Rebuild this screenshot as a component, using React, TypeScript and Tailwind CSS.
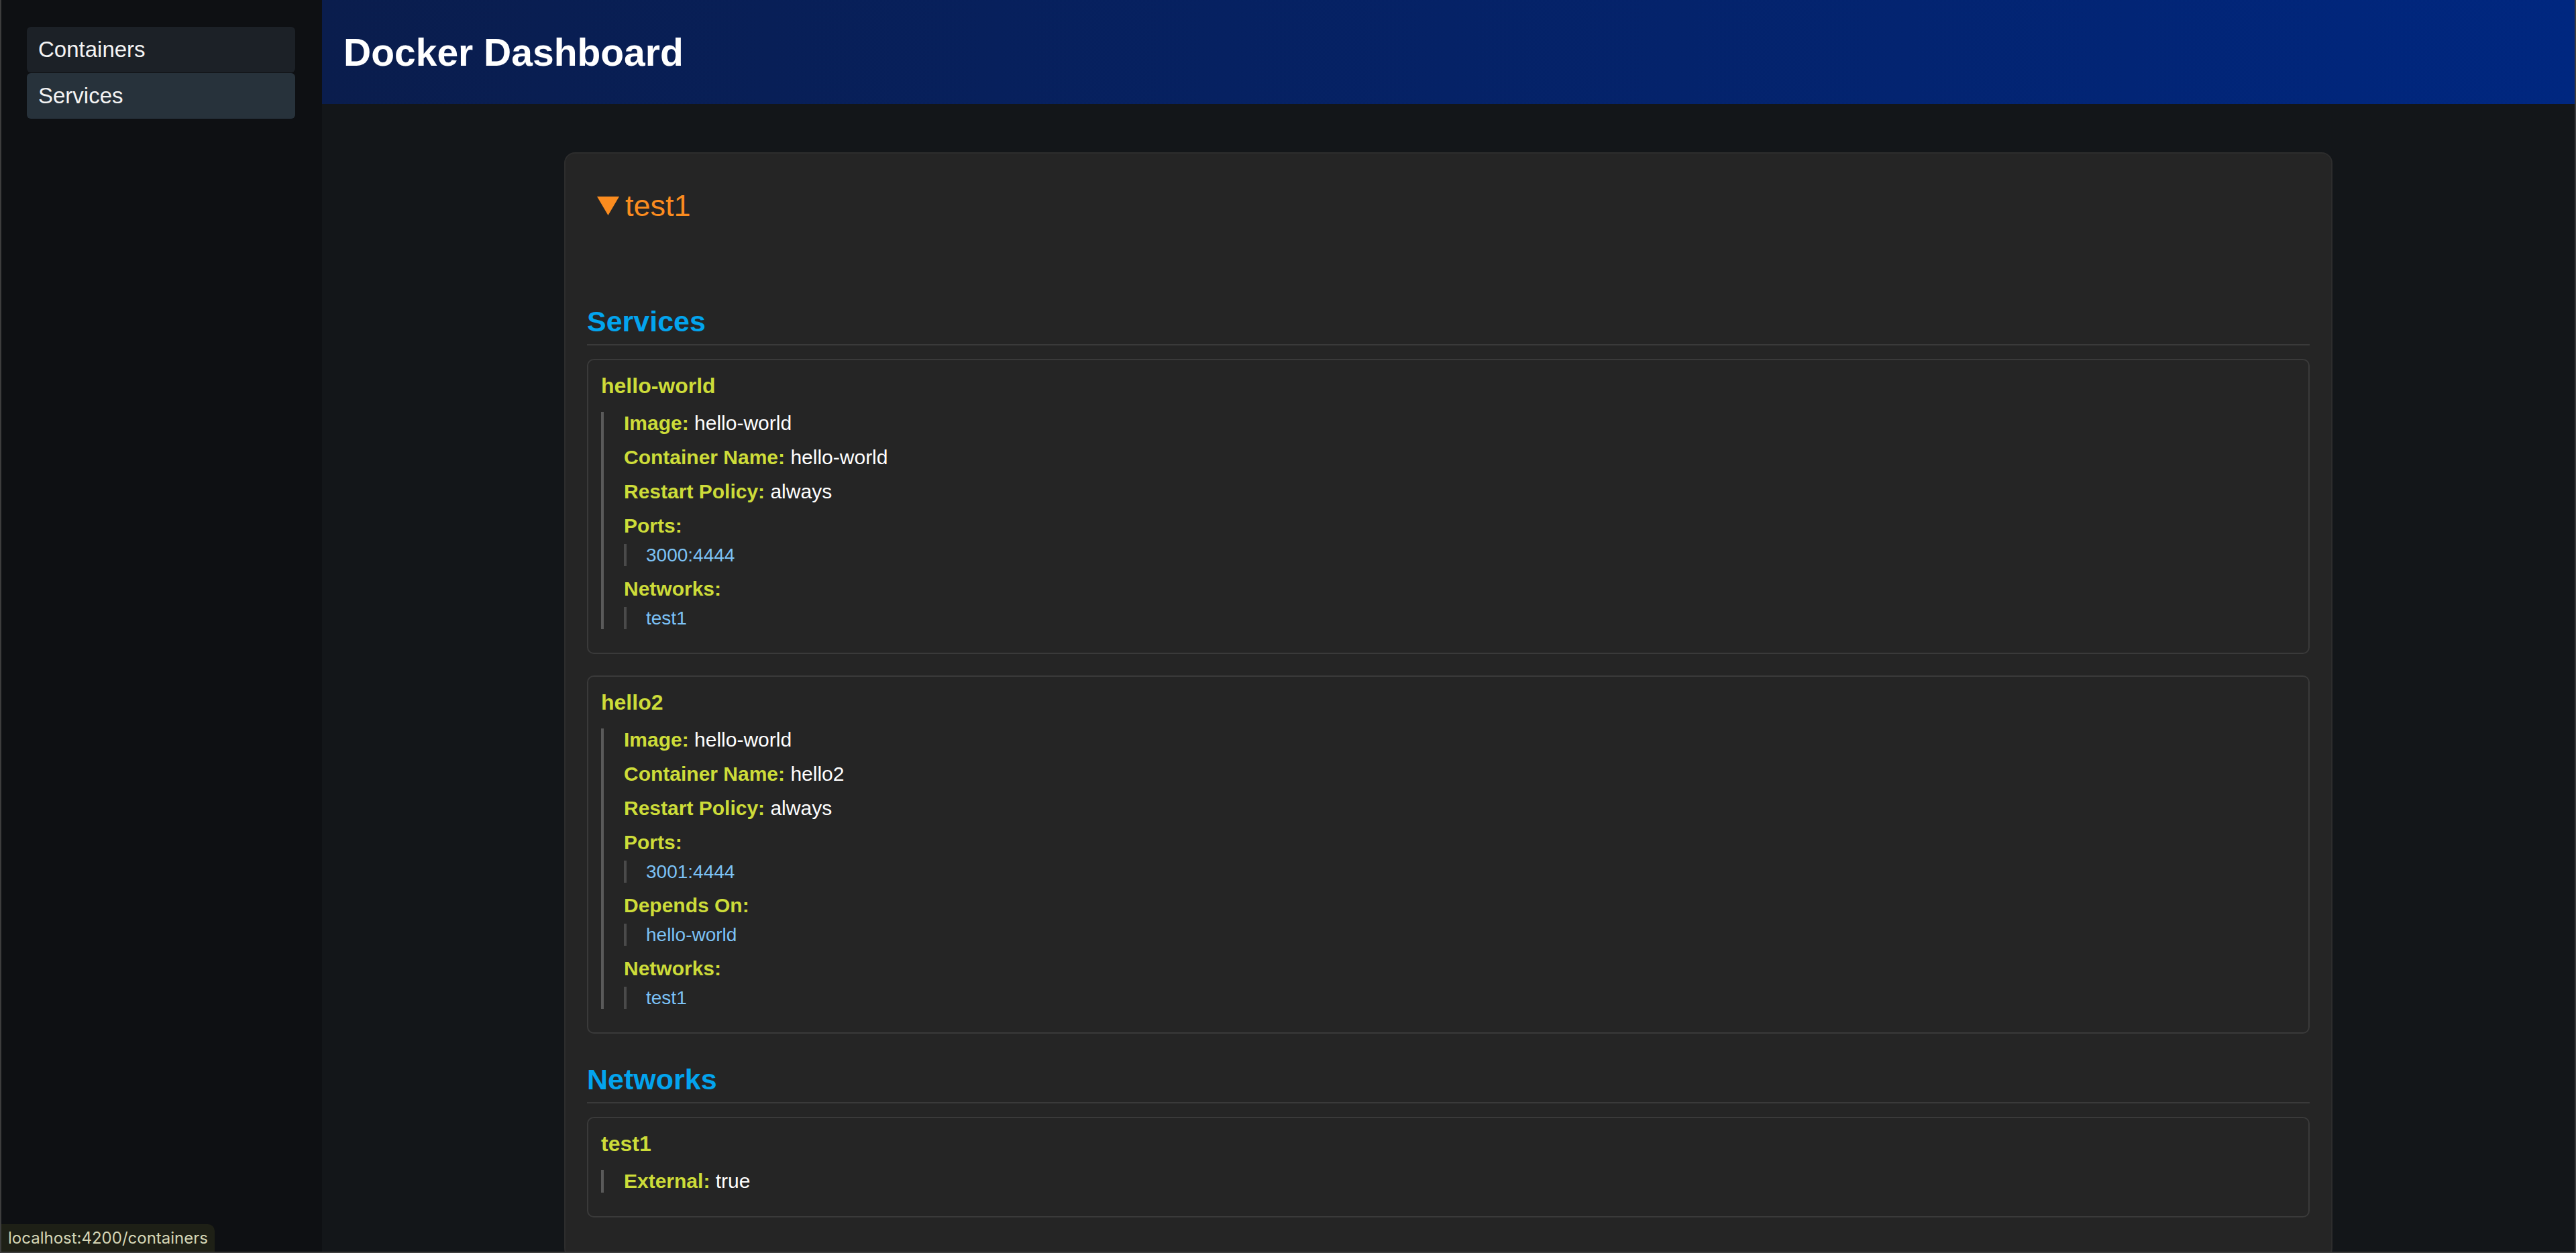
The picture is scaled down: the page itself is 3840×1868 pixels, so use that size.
import React from "react"

type Service = {
  name: string
  image: string
  containerName: string
  restart: string
  ports: string[]
  dependsOn?: string[]
  networks: string[]
}

const services: Service[] = [
  {
    name: "hello-world",
    image: "hello-world",
    containerName: "hello-world",
    restart: "always",
    ports: ["3000:4444"],
    networks: ["test1"],
  },
  {
    name: "hello2",
    image: "hello-world",
    containerName: "hello2",
    restart: "always",
    ports: ["3001:4444"],
    dependsOn: ["hello-world"],
    networks: ["test1"],
  },
]

const networks = [{ name: "test1", external: "true" }]

const navLinks = ["Containers", "Services"]

const Prop = ({ label, value }: { label: string; value: string }) => (
  <div className="text-[30px] leading-[34px]">
    <span className="font-bold text-[#cddc39]">{label}:</span>{" "}
    <span className="text-white">{value}</span>
  </div>
)

const PropList = ({ label, items }: { label: string; items: string[] }) => (
  <div>
    <div className="text-[30px] leading-[34px] font-bold text-[#cddc39]">
      {label}:
    </div>
    <div className="mt-[10px] flex flex-col border-l-[4px] border-[#4a4a4a] pl-[29px]">
      {items.map((item) => (
        <div key={item} className="text-[28px] leading-[33px] text-[#7cc2f6]">
          {item}
        </div>
      ))}
    </div>
  </div>
)

const ItemCard = ({
  title,
  children,
}: {
  title: string
  children: React.ReactNode
}) => (
  <div className="rounded-[10px] border-2 border-[#3a3a3a] px-[19px] pt-[20px] pb-[35px]">
    <div className="text-[32px] leading-[36px] font-bold text-[#cddc39]">
      {title}
    </div>
    <div className="mt-[21px] flex flex-col gap-[17px] border-l-[4px] border-[#5a5a5a] pl-[30px]">
      {children}
    </div>
  </div>
)

const SectionTitle = ({ children }: { children: React.ReactNode }) => (
  <h2 className="border-b-2 border-[#3a3a3a] pb-[8px] text-[43px] leading-[52px] font-bold text-[#03a4ee]">
    {children}
  </h2>
)

const App = () => {
  return (
    <div className="relative flex h-[1868px] w-[3840px] overflow-hidden border-x-2 border-b-2 border-[#3d3d3d] bg-[#131619] font-['Liberation_Sans',Arial,sans-serif]">
      {/* sidebar */}
      <aside className="flex w-[478px] shrink-0 flex-col gap-[1px] bg-[#0e1013] pt-[40px] pl-[38px]">
        {navLinks.map((link, i) => (
          <div
            key={link}
            className={
              i === 1
                ? "flex h-[68px] w-[400px] items-center rounded-[6px] bg-[#27323b] px-[17px] text-[33px] text-[#f4f4f4]"
                : "flex h-[68px] w-[400px] items-center rounded-[6px] bg-[#1c2127] px-[17px] text-[33px] text-[#f4f4f4]"
            }
          >
            {link}
          </div>
        ))}
      </aside>

      <main className="flex flex-1 flex-col">
        <header className="flex h-[155px] shrink-0 items-center bg-[linear-gradient(to_right,#0a1d4d,#002780)] pt-[2px] pl-[32px]">
          <h1 className="text-[57px] font-bold text-white">Docker Dashboard</h1>
        </header>

        <div className="flex-1 pt-[72px]">
          <div className="mx-auto w-[2636px] rounded-[16px] border-2 border-[#2d2d2d] bg-[#252525] px-[32px] pt-[51px] pb-[60px]">
            <div className="flex items-center gap-[9px] pl-[15px] text-[45px] leading-[54px] text-[#fb8c1f]">
              <svg width="33" height="28" viewBox="0 0 33 28">
                <polygon points="0,0 33,0 16.5,28" fill="#fb8c1f" />
              </svg>
              <span>test1</span>
            </div>

            <section className="mt-[119px]">
              <SectionTitle>Services</SectionTitle>
              <div className="mt-[20px] flex flex-col gap-[32px]">
                {services.map((s) => (
                  <ItemCard key={s.name} title={s.name}>
                    <Prop label="Image" value={s.image} />
                    <Prop label="Container Name" value={s.containerName} />
                    <Prop label="Restart Policy" value={s.restart} />
                    <PropList label="Ports" items={s.ports} />
                    {s.dependsOn ? (
                      <PropList label="Depends On" items={s.dependsOn} />
                    ) : null}
                    <PropList label="Networks" items={s.networks} />
                  </ItemCard>
                ))}
              </div>
            </section>

            <section className="mt-[42px]">
              <SectionTitle>Networks</SectionTitle>
              <div className="mt-[20px] flex flex-col gap-[32px]">
                {networks.map((n) => (
                  <ItemCard key={n.name} title={n.name}>
                    <Prop label="External" value={n.external} />
                  </ItemCard>
                ))}
              </div>
            </section>
          </div>
        </div>
      </main>

      {/* browser status link */}
      <div className="absolute bottom-0 left-0 flex h-[41px] items-center rounded-tr-[10px] bg-[#1e2016] px-[10px] font-['Inter',sans-serif] text-[24px] text-[#d6d7b6]">
        localhost:4200/containers
      </div>
    </div>
  )
}

export default App
